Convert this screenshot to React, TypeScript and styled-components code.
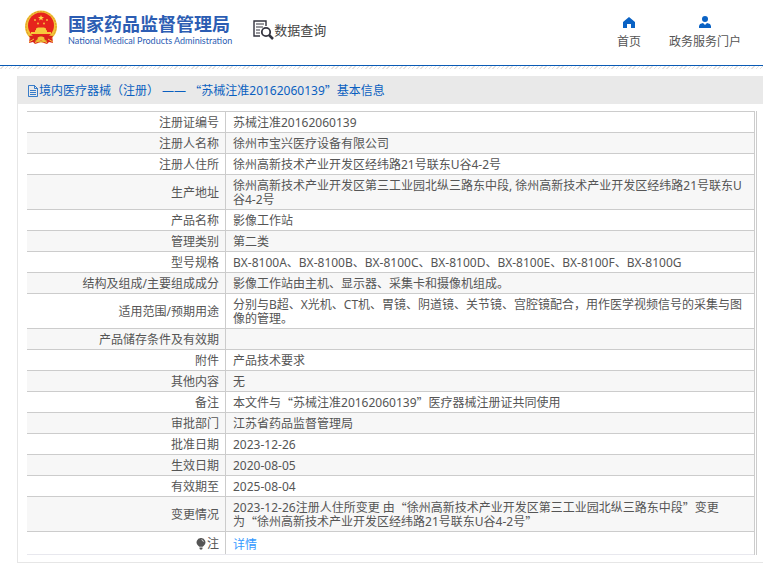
import React from "react";
import styled, { createGlobalStyle } from "styled-components";

const GlobalStyle = createGlobalStyle`
  *, *::before, *::after { box-sizing: border-box; }
  body {
    margin: 0;
    background: #fff;
    color: #555;
    font: 12px/14px "Noto Sans", "Noto Sans CJK SC", sans-serif;
  }
`;

const Header = styled.header`
  display: flex;
  align-items: flex-start;
  height: 66px;
  padding: 10px 22px 0 24px;
  border-bottom: 1px solid #0a5bb5;
`;

const Hatch = styled.div`
  height: 3px;
  background: repeating-linear-gradient(135deg, #fff 0 2px, #e6e2df 2px 3px);
`;

const Brand = styled.a`
  display: flex;
  gap: 10px;
  color: #2c5db3;
  text-decoration: none;
`;

const BrandText = styled.span`
  display: flex;
  flex-direction: column;
  padding-top: 1px;
`;

const BrandName = styled.strong`
  font: 700 18px/24px "Noto Sans CJK SC", sans-serif;
  white-space: nowrap;
`;

const BrandSub = styled.span`
  font: 400 9px/12px Lato, sans-serif;
  white-space: nowrap;
`;

const Query = styled.h1`
  display: flex;
  align-items: center;
  margin: 10px 0 0 21px;
  color: #444;
  font: 400 13px/20px "Noto Sans CJK SC", sans-serif;
  white-space: nowrap;
`;

const Nav = styled.nav`
  display: flex;
  gap: 28px;
  margin-left: auto;
  padding-top: 6px;
`;

const NavLink = styled.a`
  display: flex;
  flex-direction: column;
  align-items: center;
  gap: 7px;
  color: #555;
  text-decoration: none;
  white-space: nowrap;
`;

const Panel = styled.main`
  margin: 7px 0 6px 17px;
  border: solid #e6e6e6;
  border-width: 0 0 1px 1px;
`;

const PanelTitle = styled.h2`
  display: flex;
  align-items: center;
  height: 28px;
  margin: 0;
  padding: 1px 0 0 9px;
  background: #e9e9e9;
  color: #0a5fc0;
  font-size: 12px;
  font-weight: 400;
  white-space: pre;
`;

const TableFrame = styled.div`
  margin: 7px 6px 7px 9px;
  border-right: 3px double #ccc;
`;

const Table = styled.table`
  width: 100%;
  border-collapse: separate;
  border-spacing: 0;
  border-bottom: 1px solid #e8e8ee;
`;

const Row = styled.tr`
  &:nth-child(even) { background: #f7f7f7; }
`;

const Label = styled.th`
  width: 199px;
  padding: 4px 6px 2px 0;
  border-top: 1px solid #ccc;
  border-right: 1px solid #ccc;
  font-weight: 400;
  text-align: right;
  vertical-align: middle;
`;

const Value = styled.td`
  height: 21px;
  padding: 4px 10px 2px 7px;
  border-top: 1px solid #ccc;
  vertical-align: middle;
  white-space: pre-line;
`;

const NoteLabel = styled.span`
  display: flex;
  align-items: center;
  justify-content: flex-end;
  gap: 1px;
  height: 16px;
`;

const DetailLink = styled.a`
  display: block;
  padding-top: 2px;
  color: #3399ff;
  text-decoration: none;
`;

const Wide = styled.span`
  display: inline-block;
  height: 14px;
  font-family: "Noto Sans CJK SC", sans-serif;
  line-height: 14px;
  vertical-align: top;
`;

/* Sets quotation marks full width, as the surrounding characters are. */
function Text({ children }: { children: string }) {
  return (
    <>
      {children.split(/([“”])/).map((part, i) =>
        /^[“”]$/.test(part) ? <Wide key={i} lang="zh-CN">{part}</Wide> : part
      )}
    </>
  );
}

const rows: [string, string][] = [
  ["注册证编号", "苏械注准20162060139"],
  ["注册人名称", "徐州市宝兴医疗设备有限公司"],
  ["注册人住所", "徐州高新技术产业开发区经纬路21号联东U谷4-2号"],
  ["生产地址", "徐州高新技术产业开发区第三工业园北纵三路东中段, 徐州高新技术产业开发区经纬路21号联东U谷4-2号"],
  ["产品名称", "影像工作站"],
  ["管理类别", "第二类"],
  ["型号规格", "BX-8100A、BX-8100B、BX-8100C、BX-8100D、BX-8100E、BX-8100F、BX-8100G"],
  ["结构及组成/主要组成成分", "影像工作站由主机、显示器、采集卡和摄像机组成。"],
  ["适用范围/预期用途", "分别与B超、X光机、CT机、胃镜、阴道镜、关节镜、宫腔镜配合，用作医学视频信号的采集与图像的管理。"],
  ["产品储存条件及有效期", ""],
  ["附件", "产品技术要求"],
  ["其他内容", "无"],
  ["备注", "本文件与“苏械注准20162060139”医疗器械注册证共同使用"],
  ["审批部门", "江苏省药品监督管理局"],
  ["批准日期", "2023-12-26"],
  ["生效日期", "2020-08-05"],
  ["有效期至", "2025-08-04"],
  ["变更情况", "2023-12-26注册人住所变更 由“徐州高新技术产业开发区第三工业园北纵三路东中段”变更\n为“徐州高新技术产业开发区经纬路21号联东U谷4-2号”"],
];

const Emblem = () => (
  <svg width="34" height="36" viewBox="0 0 34 36" aria-hidden="true">
    <path d="M6 25 5 33l4-1 2 2 6-2 6 2 2-2 4 1-1-8z" fill="#d9221c" />
    <ellipse cx="17" cy="16.500" rx="16" ry="16" fill="#f3c33a" />
    <ellipse cx="17" cy="16.500" rx="15" ry="15" fill="none" stroke="#d99a22" strokeWidth="1" strokeDasharray="2 1" />
    <circle cx="17" cy="15.500" r="13" fill="#e6231c" />
    <path d="m17 5 .8 2h2.200l-1.800 1.400.7 2.100L17 9.300l-1.900 1.200.7-2.100L14 7h2.200z" fill="#ffd84a" />
    <g fill="#f7c93c">
      <circle cx="11" cy="10" r=".9" /><circle cx="23" cy="10" r=".9" />
      <circle cx="14" cy="13.500" r=".9" /><circle cx="20" cy="13.500" r=".9" />
      <path d="M12 20v-1.500l2-1h6l2 1V20l1 .5V22h4v2H7v-2h4v-1.500z" />
    </g>
    <path d="M5 26c6-1 18-1 24 0l-2 3 1 3-5-1-3-2-3 2-3-2-3 2-5 1 1-3z" fill="#d9221c" />
    <path d="M13.500 28c1-2 6-2 7 0l-1 2.500h-5z" fill="#f3c33a" />
    <path d="m5 32 5-3M29 32l-5-3M11 33l3-2M23 33l-3-2" stroke="#f3c33a" />
  </svg>
);

const SearchDocIcon = () => (
  <svg width="21" height="20" viewBox="0 0 21 20" fill="none" stroke="#34343f" aria-hidden="true">
    <path d="M13 6V1H1v15h6" strokeWidth="1.400" />
    <path d="M3 4h8M3 7h7M3 10h4M3 13h4" />
    <circle cx="13" cy="12" r="4.200" strokeWidth="1.800" />
    <path d="m16 15 4 4" strokeWidth="2.500" />
  </svg>
);

const HomeIcon = () => (
  <svg width="12" height="12" viewBox="0 0 12 12" fill="#0a62c4" aria-hidden="true">
    <path d="M6 1 0 6v6h4V8h4v4h4V6z" />
  </svg>
);

const UserIcon = () => (
  <svg width="12" height="12" viewBox="0 0 12 12" fill="#0a62c4" aria-hidden="true">
    <circle cx="6" cy="3" r="3" />
    <path d="M0 12v-2l1-2 3-1 2 2 2-2 3 1 1 2v2z" />
  </svg>
);

const DocIcon = () => (
  <svg width="12" height="12" viewBox="0 0 12 12" fill="none" stroke="#0a5fc0" aria-hidden="true">
    <path d="M1.500 .5h6l3 3v8h-9zM7.500 .5v3h3M3 5.500h6M3 7.500h6M3 9.500h6" strokeWidth=".8" />
  </svg>
);

const BulbIcon = () => (
  <svg width="10" height="12" viewBox="0 0 10 12" aria-hidden="true">
    <path d="M5 0a4.300 4.300 0 0 0-3 7.500l1.300 1.300h3.400L8 7.500A4.300 4.300 0 0 0 5 0zM3.500 9.500h3v1L6 11.500H4l-.5-1z" fill="#555" />
    <path d="M5.500 1.700c1 .2 1.700 1 1.900 2" fill="none" stroke="#fff" strokeWidth=".8" />
  </svg>
);

export default function App() {
  return (
    <>
      <GlobalStyle />
      <Header>
        <Brand href="#">
          <Emblem />
          <BrandText>
            <BrandName>国家药品监督管理局</BrandName>
            <BrandSub>National Medical Products Administration</BrandSub>
          </BrandText>
        </Brand>
        <Query><SearchDocIcon />数据查询</Query>
        <Nav>
          <NavLink href="#"><HomeIcon />首页</NavLink>
          <NavLink href="#"><UserIcon />政务服务门户</NavLink>
        </Nav>
      </Header>
      <Hatch />
      <Panel>
        <PanelTitle>
          <DocIcon />
          <span><Text>境内医疗器械（注册） —— “苏械注准20162060139”基本信息</Text></span>
        </PanelTitle>
        <TableFrame>
          <Table>
            <tbody>
              {rows.map(([label, value]) => (
                <Row key={label}>
                  <Label scope="row">{label}</Label>
                  <Value><Text>{value}</Text></Value>
                </Row>
              ))}
              <Row>
                <Label scope="row"><NoteLabel><BulbIcon />注</NoteLabel></Label>
                <Value><DetailLink href="#">详情</DetailLink></Value>
              </Row>
            </tbody>
          </Table>
        </TableFrame>
      </Panel>
    </>
  );
}
